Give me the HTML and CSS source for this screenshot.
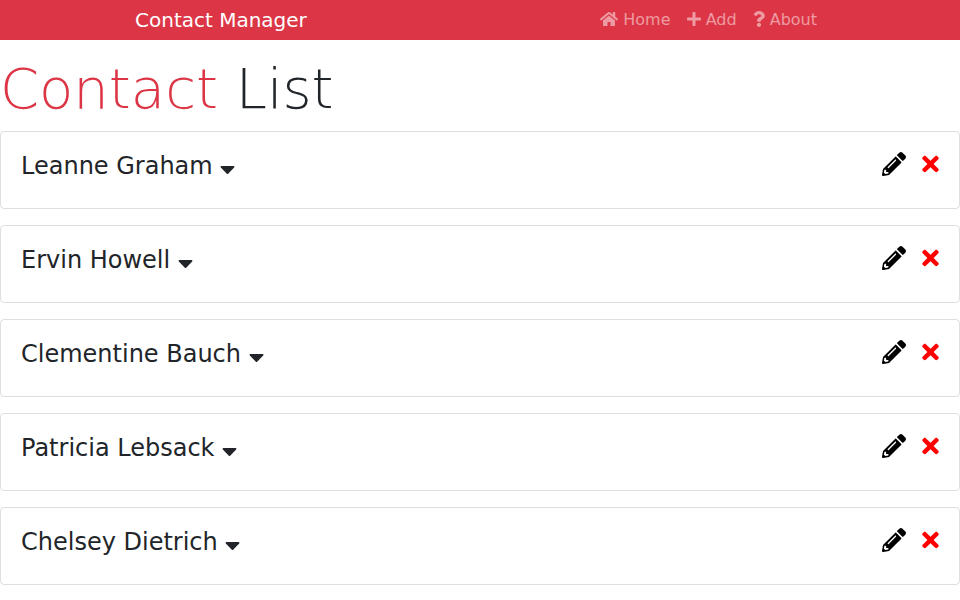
FILE: index.html
```html
<!DOCTYPE html>
<html lang="en">
<head>
<meta charset="utf-8">
<title>Contact Manager</title>
<link rel="stylesheet" href="styles.css">
</head>
<body>
<svg class="sprite" aria-hidden="true">
  <symbol id="home" viewBox="0 0 576 512"><path d="M280.37 148.26L96 300.11V464a16 16 0 0 0 16 16l112.06-.29a16 16 0 0 0 15.92-16V368a16 16 0 0 1 16-16h64a16 16 0 0 1 16 16v95.64a16 16 0 0 0 16 16.05L464 480a16 16 0 0 0 16-16V300L295.67 148.26a12.19 12.19 0 0 0-15.3 0zM571.6 251.47L488 182.56V44.05a12 12 0 0 0-12-12h-56a12 12 0 0 0-12 12v72.61L318.47 43a48 48 0 0 0-61 0L4.34 251.47a12 12 0 0 0-1.6 16.9l25.5 31A12 12 0 0 0 45.15 301l235.22-193.74a12.19 12.19 0 0 1 15.3 0L530.9 301a12 12 0 0 0 16.9-1.6l25.5-31a12 12 0 0 0-1.7-16.93z"/></symbol>
  <symbol id="plus" viewBox="0 0 448 512"><path d="M416 208H272V64c0-17.67-14.33-32-32-32h-32c-17.67 0-32 14.33-32 32v144H32c-17.67 0-32 14.33-32 32v32c0 17.67 14.33 32 32 32h144v144c0 17.67 14.33 32 32 32h32c17.67 0 32-14.33 32-32V304h144c17.67 0 32-14.33 32-32v-32c0-17.67-14.33-32-32-32z"/></symbol>
  <symbol id="question" viewBox="0 0 384 512"><path d="M202.021 0C122.202 0 70.503 32.703 29.914 91.026c-7.363 10.58-5.093 25.086 5.178 32.874l43.138 32.709c10.373 7.865 25.132 6.026 33.253-4.148 25.049-31.381 43.63-49.449 82.757-49.449 30.764 0 68.816 19.799 68.816 49.631 0 22.552-18.617 34.134-48.993 51.164-35.423 19.86-82.299 44.576-82.299 106.405V320c0 13.255 10.745 24 24 24h72.471c13.255 0 24-10.745 24-24v-5.773c0-42.86 125.268-44.645 125.268-160.627C377.504 66.256 286.902 0 202.021 0zM192 373.459c-38.196 0-69.271 31.075-69.271 69.271 0 38.195 31.075 69.27 69.271 69.27s69.271-31.075 69.271-69.271-31.075-69.27-69.271-69.27z"/></symbol>
  <symbol id="caret" viewBox="0 0 320 512"><path d="M31.3 192h257.3c17.8 0 26.7 21.5 14.1 34.1L174.1 354.8c-7.8 7.8-20.5 7.8-28.3 0L17.2 226.1C4.6 213.5 13.5 192 31.3 192z"/></symbol>
  <symbol id="pencil" viewBox="0 0 512 512"><path d="M497.9 142.1l-46.1 46.1c-4.7 4.7-12.3 4.7-17 0l-111-111c-4.7-4.7-4.7-12.3 0-17l46.1-46.1c18.7-18.7 49.1-18.7 67.9 0l60.1 60.1c18.8 18.7 18.8 49.1 0 67.9zM284.2 99.8L21.6 362.4.4 483.9c-2.9 16.4 11.4 30.6 27.8 27.8l121.5-21.3 262.6-262.6c4.7-4.7 4.7-12.3 0-17l-111-111c-4.8-4.7-12.4-4.7-17.1 0zM124.1 339.9c-5.5-5.5-5.5-14.3 0-19.8l154-154c5.5-5.5 14.3-5.5 19.8 0s5.5 14.3 0 19.8l-154 154c-5.5 5.5-14.3 5.5-19.8 0zM88 424h48v36.3l-64.5 11.3-31.1-31.1L51.7 376H88v48z"/></symbol>
  <symbol id="times" viewBox="0 0 352 512"><path d="M242.72 256l100.07-100.07c12.28-12.28 12.28-32.19 0-44.48l-22.24-22.24c-12.28-12.28-32.19-12.28-44.48 0L176 189.28 75.93 89.21c-12.28-12.28-32.19-12.28-44.48 0L9.21 111.45c-12.28 12.28-12.28 32.19 0 44.48L109.28 256 9.21 356.07c-12.28 12.28-12.28 32.19 0 44.48l22.24 22.24c12.28 12.28 32.2 12.28 44.48 0L176 322.72l100.07 100.07c12.28 12.28 32.2 12.28 44.48 0l22.24-22.24c12.28-12.28 12.28-32.19 0-44.48L242.72 256z"/></symbol>
</svg>
<header class="navbar">
  <div class="container">
    <a class="brand" href="#">Contact Manager</a>
    <nav>
      <ul class="nav">
        <li><a href="#"><svg class="icon icon-home"><use href="#home"/></svg> Home</a></li>
        <li><a href="#"><svg class="icon icon-plus"><use href="#plus"/></svg> Add</a></li>
        <li><a href="#"><svg class="icon icon-question"><use href="#question"/></svg> About</a></li>
      </ul>
    </nav>
  </div>
</header>
<main>
  <h1><span class="accent">Contact</span> List</h1>
  <section class="card">
    <h2>Leanne Graham <button class="toggle" aria-label="Show details"><svg class="icon icon-caret"><use href="#caret"/></svg></button></h2>
    <div class="actions"><a href="#" aria-label="Edit"><svg class="icon icon-pencil"><use href="#pencil"/></svg></a><button class="delete" aria-label="Delete"><svg class="icon icon-times"><use href="#times"/></svg></button></div>
  </section>
  <section class="card">
    <h2>Ervin Howell <button class="toggle" aria-label="Show details"><svg class="icon icon-caret"><use href="#caret"/></svg></button></h2>
    <div class="actions"><a href="#" aria-label="Edit"><svg class="icon icon-pencil"><use href="#pencil"/></svg></a><button class="delete" aria-label="Delete"><svg class="icon icon-times"><use href="#times"/></svg></button></div>
  </section>
  <section class="card">
    <h2>Clementine Bauch <button class="toggle" aria-label="Show details"><svg class="icon icon-caret"><use href="#caret"/></svg></button></h2>
    <div class="actions"><a href="#" aria-label="Edit"><svg class="icon icon-pencil"><use href="#pencil"/></svg></a><button class="delete" aria-label="Delete"><svg class="icon icon-times"><use href="#times"/></svg></button></div>
  </section>
  <section class="card">
    <h2>Patricia Lebsack <button class="toggle" aria-label="Show details"><svg class="icon icon-caret"><use href="#caret"/></svg></button></h2>
    <div class="actions"><a href="#" aria-label="Edit"><svg class="icon icon-pencil"><use href="#pencil"/></svg></a><button class="delete" aria-label="Delete"><svg class="icon icon-times"><use href="#times"/></svg></button></div>
  </section>
  <section class="card">
    <h2>Chelsey Dietrich <button class="toggle" aria-label="Show details"><svg class="icon icon-caret"><use href="#caret"/></svg></button></h2>
    <div class="actions"><a href="#" aria-label="Edit"><svg class="icon icon-pencil"><use href="#pencil"/></svg></a><button class="delete" aria-label="Delete"><svg class="icon icon-times"><use href="#times"/></svg></button></div>
  </section>
</main>
</body>
</html>
```
FILE: styles.css
```css
* {
  box-sizing: border-box;
}

body {
  margin: 0;
  background: #fff;
  color: #212529;
  font-family: "DejaVu Sans", sans-serif;
  font-size: 16px;
  line-height: 24px;
}

.sprite {
  display: none;
}

.navbar {
  background: #dc3545;
}

.container {
  display: flex;
  align-items: center;
  justify-content: space-between;
  max-width: 720px;
  height: 40px;
  margin: 0 auto;
  padding: 0 15px;
}

.brand {
  color: #fff;
  font-size: 20px;
  line-height: 30px;
  text-decoration: none;
}

.nav {
  display: flex;
  margin: 0;
  padding: 0;
  list-style: none;
}

.nav a {
  display: block;
  padding: 0 8px;
  color: rgba(255, 255, 255, 0.5);
  text-decoration: none;
}

.icon {
  display: inline-block;
  height: 1em;
  overflow: visible;
  vertical-align: -2px;
  fill: currentColor;
}

.icon-home {
  width: 18px;
}

.icon-plus {
  width: 14px;
}

.icon-question {
  width: 12px;
}

h1 {
  margin: 16px 0 10px;
  font-size: 56px;
  font-weight: 200;
  line-height: 65px;
}

.accent {
  color: #dc3545;
}

.card {
  display: flex;
  justify-content: space-between;
  align-items: flex-start;
  min-height: 78px;
  margin-bottom: 16px;
  padding: 20px;
  border: 1px solid rgba(0, 0, 0, 0.125);
  border-radius: 4px;
}

h2 {
  margin: 0;
  font-size: 24px;
  font-weight: 400;
  line-height: 28px;
}

button {
  padding: 0;
  border: 0;
  background: none;
  color: inherit;
  font: inherit;
  cursor: pointer;
}

.toggle {
  line-height: 24px;
  vertical-align: top;
}

.icon-caret {
  width: 15px;
  margin-top: 5px;
  vertical-align: top;
}

.actions {
  display: flex;
  gap: 16px;
  font-size: 24px;
  line-height: 24px;
}

.actions a {
  color: #000;
}

.actions .icon {
  display: block;
}

.icon-pencil {
  width: 24px;
}

.delete {
  color: #f00;
}

.icon-times {
  width: 17px;
}
```
